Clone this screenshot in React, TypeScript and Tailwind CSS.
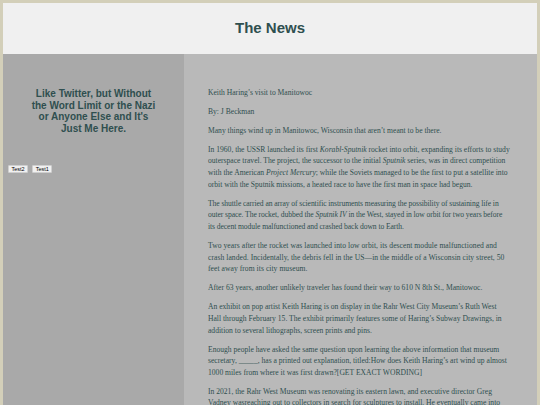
const paragraphs: { text: React.ReactNode; track?: string }[] = [
  { text: "Keith Haring’s visit to Manitowoc" },
  { text: "By: J Beckman" },
  { text: "Many things wind up in Manitowoc, Wisconsin that aren’t meant to be there." },
  {
    text: (
      <>
        In 1960, the USSR launched its first <i>Korabl-Sputnik</i> rocket into orbit, expanding its
        efforts to study outerspace travel. The project, the successor to the initial <i>Sputnik</i>{" "}
        series, was in direct competition with the American <i>Project Mercury</i>; while the Soviets
        managed to be the first to put a satellite into orbit with the Sputnik missions, a heated race
        to have the first man in space had begun.
      </>
    ),
  },
  {
    track: "tracking-[-0.07px]",
    text: (
      <>
        The shuttle carried an array of scientific instruments measuring the possibility of sustaining
        life in outer space. The rocket, dubbed the <i>Sputnik IV</i> in the West, stayed in low orbit
        for two years before its decent module malfunctioned and crashed back down to Earth.
      </>
    ),
  },
  {
    track: "tracking-[0.05px]",
    text: "Two years after the rocket was launched into low orbit, its descent module malfunctioned and crash landed. Incidentally, the debris fell in the US—in the middle of a Wisconsin city street, 50 feet away from its city museum.",
  },
  { text: "After 63 years, another unlikely traveler has found their way to 610 N 8th St., Manitowoc." },
  {
    text: "An exhibit on pop artist Keith Haring is on display in the Rahr West City Museum’s Ruth West Hall through February 15. The exhibit primarily features some of Haring’s Subway Drawings, in addition to several lithographs, screen prints and pins.",
  },
  {
    text: "Enough people have asked the same question upon learning the above information that museum secretary, _____, has a printed out explanation, titled:How does Keith Haring’s art wind up almost 1000 miles from where it was first drawn?[GET EXACT WORDING]",
  },
  {
    text: "In 2021, the Rahr West Museum was renovating its eastern lawn, and executive director Greg Vadney wasreaching out to collectors in search for sculptures to install. He eventually came into contact with a collector who had more than sculptures to offer.",
  },
];

export default function App() {
  return (
    <div className="min-h-screen bg-[#d3cfb9] px-[3px] pt-[3px]">
      <header className="flex h-[51px] items-center justify-center bg-[#f0f0f0]">
        <h1 className="font-['Liberation_Sans',Arial,sans-serif] text-[15px] font-bold text-[#2f4f4f]">
          The News
        </h1>
      </header>
      <div className="flex min-h-[351px]">
        <aside className="w-[181px] shrink-0 bg-[#a9a9a9] px-[5px] pt-[26px]">
          <h2 className="mx-[19px] mt-[8px] text-center font-['Liberation_Sans',Arial,sans-serif] text-[10px] leading-[11.5px] font-bold text-[#2f4f4f]">
            Like Twitter, but Without the Word Limit or the Nazi or Anyone Else and It's Just Me Here.
          </h2>
          <div className="mt-[31px] flex gap-[4px] font-['Liberation_Sans',Arial,sans-serif]">
            <button className="h-[8px] rounded-[1px] border border-[#cfcfcf] bg-[#f0f0f0] px-[2.5px] text-[5.5px] leading-[6px] text-black">
              Test2
            </button>
            <button className="h-[8px] rounded-[1px] border border-[#cfcfcf] bg-[#f0f0f0] px-[2.5px] text-[5.5px] leading-[6px] text-black">
              Test1
            </button>
          </div>
        </aside>
        <main className="flex-1 bg-[#b9b9b9] pt-[25px] pr-[26.5px] pl-[24px] font-['Liberation_Serif','Times_New_Roman',serif] text-[7.6px] leading-[11.6px] text-[#2f4f4f]">
          {paragraphs.map((p, i) => (
            <p key={i} className={p.track ? `my-[7.5px] ${p.track}` : "my-[7.5px]"}>
              {p.text}
            </p>
          ))}
        </main>
      </div>
    </div>
  );
}
